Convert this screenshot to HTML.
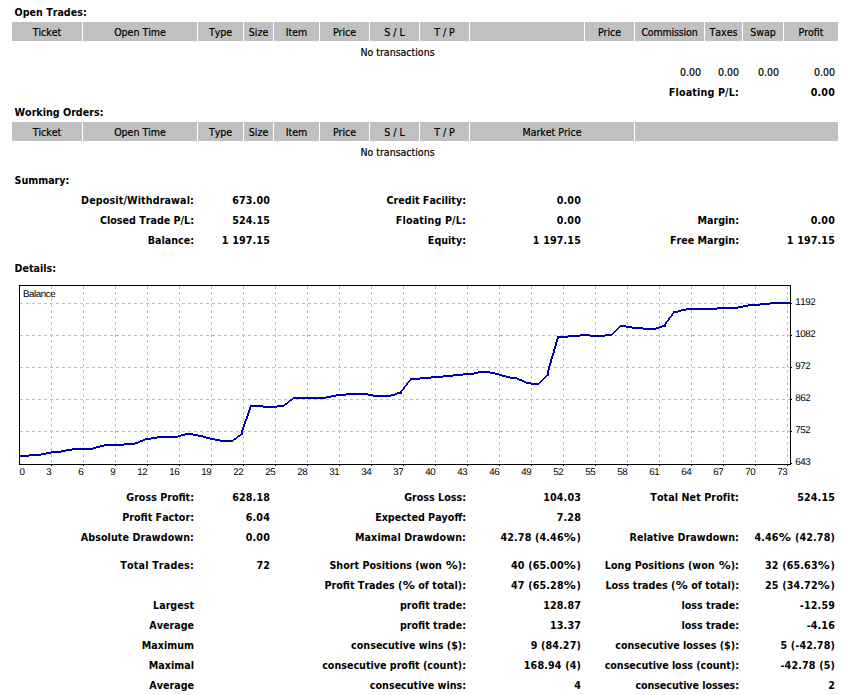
<!DOCTYPE html>
<html lang="en"><head><meta charset="utf-8"><title>Statement</title>
<style>
html,body{margin:0;padding:0;background:#fff}
body{width:853px;height:695px;position:relative;overflow:hidden;font-family:"DejaVu Sans Condensed", "Liberation Sans", sans-serif;font-size:10.5px;color:#000;font-kerning:none;-webkit-text-stroke:0.2px #000}
.t{position:absolute;white-space:nowrap;line-height:20px;height:20px}
.b{font-weight:bold;font-size:10.65px;-webkit-text-stroke:0}
.r{text-align:right}
.p{display:inline-block;transform:scaleX(1.25);margin:0 1.5px}
.c{text-align:center}
.h{position:absolute;height:19px;line-height:20px;background:#c0c0c0;text-align:center;white-space:nowrap}
.chart{position:absolute;display:block}
</style></head><body>
<div class="t b" style="left:14.5px;top:3px">Open Trades:</div>
<div class="h" style="left:12px;top:22px;width:70px">Ticket</div>
<div class="h" style="left:83px;top:22px;width:114px">Open Time</div>
<div class="h" style="left:198px;top:22px;width:45px">Type</div>
<div class="h" style="left:244px;top:22px;width:29px">Size</div>
<div class="h" style="left:274px;top:22px;width:45px">Item</div>
<div class="h" style="left:320px;top:22px;width:49px">Price</div>
<div class="h" style="left:370px;top:22px;width:49px">S / L</div>
<div class="h" style="left:420px;top:22px;width:49px">T / P</div>
<div class="h" style="left:470px;top:22px;width:114px"></div>
<div class="h" style="left:585px;top:22px;width:49px">Price</div>
<div class="h" style="left:635px;top:22px;width:69px;letter-spacing:-0.15px">Commission</div>
<div class="h" style="left:705px;top:22px;width:37px">Taxes</div>
<div class="h" style="left:743px;top:22px;width:40px">Swap</div>
<div class="h" style="left:784px;top:22px;width:54px">Profit</div>
<div class="t c" style="left:247.5px;top:42px;width:300px">No transactions</div>
<div class="t r" style="left:401px;top:62px;width:300px">0.00</div>
<div class="t r" style="left:439px;top:62px;width:300px">0.00</div>
<div class="t r" style="left:479px;top:62px;width:300px">0.00</div>
<div class="t r" style="left:535px;top:62px;width:300px">0.00</div>
<div class="t b r" style="left:439px;top:83px;width:300px;letter-spacing:0.16px">Floating P/L:</div>
<div class="t b r" style="left:535px;top:83px;width:300px;letter-spacing:0.15px">0.00</div>
<div class="t b" style="left:14.5px;top:103px">Working Orders:</div>
<div class="h" style="left:12px;top:122px;width:70px">Ticket</div>
<div class="h" style="left:83px;top:122px;width:114px">Open Time</div>
<div class="h" style="left:198px;top:122px;width:45px">Type</div>
<div class="h" style="left:244px;top:122px;width:29px">Size</div>
<div class="h" style="left:274px;top:122px;width:45px">Item</div>
<div class="h" style="left:320px;top:122px;width:49px">Price</div>
<div class="h" style="left:370px;top:122px;width:49px">S / L</div>
<div class="h" style="left:420px;top:122px;width:49px">T / P</div>
<div class="h" style="left:470px;top:122px;width:164px">Market Price</div>
<div class="h" style="left:635px;top:122px;width:203px"></div>
<div class="t c" style="left:247.5px;top:142px;width:300px">No transactions</div>
<div class="t b" style="left:14.5px;top:171px">Summary:</div>
<div class="t b r" style="left:-106px;top:191px;width:300px;letter-spacing:0.12px">Deposit/Withdrawal:</div>
<div class="t b r" style="left:-30px;top:191px;width:300px;letter-spacing:0.15px">673.00</div>
<div class="t b r" style="left:166px;top:191px;width:300px">Credit Facility:</div>
<div class="t b r" style="left:281px;top:191px;width:300px;letter-spacing:0.15px">0.00</div>
<div class="t b r" style="left:-106px;top:211px;width:300px">Closed Trade P/L:</div>
<div class="t b r" style="left:-30px;top:211px;width:300px;letter-spacing:0.15px">524.15</div>
<div class="t b r" style="left:166px;top:211px;width:300px;letter-spacing:0.16px">Floating P/L:</div>
<div class="t b r" style="left:281px;top:211px;width:300px;letter-spacing:0.15px">0.00</div>
<div class="t b r" style="left:439px;top:211px;width:300px">Margin:</div>
<div class="t b r" style="left:535px;top:211px;width:300px;letter-spacing:0.15px">0.00</div>
<div class="t b r" style="left:-106px;top:231px;width:300px">Balance:</div>
<div class="t b r" style="left:-30px;top:231px;width:300px;letter-spacing:0.15px">1 197.15</div>
<div class="t b r" style="left:166px;top:231px;width:300px">Equity:</div>
<div class="t b r" style="left:281px;top:231px;width:300px;letter-spacing:0.15px">1 197.15</div>
<div class="t b r" style="left:439px;top:231px;width:300px">Free Margin:</div>
<div class="t b r" style="left:535px;top:231px;width:300px;letter-spacing:0.15px">1 197.15</div>
<div class="t b" style="left:14.5px;top:259px">Details:</div>
<svg class="chart" style="left:16px;top:282px" width="820" height="200" viewBox="16 282 820 200">
<path d="M51.5 286V464M83.5 286V464M115.5 286V464M147.5 286V464M179.5 286V464M211.5 286V464M243.5 286V464M275.5 286V464M307.5 286V464M339.5 286V464M371.5 286V464M403.5 286V464M435.5 286V464M467.5 286V464M499.5 286V464M531.5 286V464M563.5 286V464M595.5 286V464M627.5 286V464M659.5 286V464M691.5 286V464M723.5 286V464M755.5 286V464M787.5 286V464M20 303.5H790M20 335.5H790M20 367.5H790M20 399.5H790M20 431.5H790" stroke="#c0c0c0" stroke-width="1" stroke-dasharray="3 3" fill="none" shape-rendering="crispEdges"/>
<path d="M51.5 465v1M83.5 465v1M115.5 465v1M147.5 465v1M179.5 465v1M211.5 465v1M243.5 465v1M275.5 465v1M307.5 465v1M339.5 465v1M371.5 465v1M403.5 465v1M435.5 465v1M467.5 465v1M499.5 465v1M531.5 465v1M563.5 465v1M595.5 465v1M627.5 465v1M659.5 465v1M691.5 465v1M723.5 465v1M755.5 465v1M787.5 465v1M791 303.5h1M791 335.5h1M791 367.5h1M791 399.5h1M791 431.5h1M791 463.5h1" stroke="#000" stroke-width="1" fill="none" shape-rendering="crispEdges"/>
<path d="M770 302h20v1h-20zM760 303h30v1h-30zM748 304h22v1h-22zM743 305h17v1h-17zM738 306h10v1h-10zM717 307h26v1h-26zM686 308h52v1h-52zM681 309h36v1h-36zM678 310h8v1h-8zM673 311h8v1h-8zM673 312h5v1h-5zM672 313h2v1h-2zM671 314h2v1h-2zM671 315h2v1h-2zM670 316h2v1h-2zM669 317h2v1h-2zM668 318h2v1h-2zM668 319h2v1h-2zM667 320h2v1h-2zM666 321h2v1h-2zM665 322h2v1h-2zM665 323h2v1h-2zM664 324h2v1h-2zM620 325h6v1h-6zM662 325h4v1h-4zM619 326h13v1h-13zM659 326h7v1h-7zM618 327h2v1h-2zM626 327h17v1h-17zM656 327h6v1h-6zM617 328h2v1h-2zM632 328h27v1h-27zM616 329h2v1h-2zM643 329h13v1h-13zM615 330h2v1h-2zM614 331h2v1h-2zM613 332h2v1h-2zM612 333h2v1h-2zM580 334h10v1h-10zM605 334h8v1h-8zM568 335h44v1h-44zM557 336h23v1h-23zM590 336h15v1h-15zM557 337h11v1h-11zM557 338h2v1h-2zM556 339h2v1h-2zM556 340h2v1h-2zM556 341h2v1h-2zM555 342h2v1h-2zM555 343h2v1h-2zM555 344h2v1h-2zM555 345h2v1h-2zM554 346h2v1h-2zM554 347h2v1h-2zM554 348h2v1h-2zM553 349h2v1h-2zM553 350h2v1h-2zM553 351h2v1h-2zM553 352h2v1h-2zM552 353h2v1h-2zM552 354h2v1h-2zM552 355h2v1h-2zM551 356h2v1h-2zM551 357h2v1h-2zM551 358h2v1h-2zM550 359h2v1h-2zM550 360h2v1h-2zM550 361h2v1h-2zM550 362h2v1h-2zM549 363h2v1h-2zM549 364h2v1h-2zM549 365h2v1h-2zM548 366h2v1h-2zM548 367h2v1h-2zM548 368h2v1h-2zM548 369h2v1h-2zM547 370h2v1h-2zM478 371h12v1h-12zM547 371h2v1h-2zM474 372h21v1h-21zM547 372h2v1h-2zM463 373h15v1h-15zM490 373h9v1h-9zM547 373h2v1h-2zM453 374h21v1h-21zM495 374h7v1h-7zM547 374h2v1h-2zM443 375h20v1h-20zM499 375h7v1h-7zM546 375h3v1h-3zM431 376h22v1h-22zM502 376h8v1h-8zM545 376h2v1h-2zM420 377h23v1h-23zM506 377h11v1h-11zM544 377h2v1h-2zM410 378h21v1h-21zM510 378h9v1h-9zM543 378h2v1h-2zM410 379h10v1h-10zM517 379h5v1h-5zM542 379h2v1h-2zM409 380h2v1h-2zM519 380h5v1h-5zM541 380h2v1h-2zM408 381h2v1h-2zM522 381h4v1h-4zM540 381h2v1h-2zM407 382h2v1h-2zM524 382h7v1h-7zM539 382h2v1h-2zM406 383h2v1h-2zM526 383h14v1h-14zM406 384h2v1h-2zM531 384h8v1h-8zM405 385h2v1h-2zM404 386h2v1h-2zM403 387h2v1h-2zM403 388h2v1h-2zM402 389h2v1h-2zM401 390h2v1h-2zM400 391h2v1h-2zM397 392h5v1h-5zM346 393h22v1h-22zM395 393h7v1h-7zM336 394h37v1h-37zM391 394h6v1h-6zM331 395h15v1h-15zM368 395h27v1h-27zM326 396h10v1h-10zM373 396h18v1h-18zM293 397h38v1h-38zM292 398h34v1h-34zM290 399h3v1h-3zM289 400h3v1h-3zM288 401h2v1h-2zM287 402h2v1h-2zM285 403h3v1h-3zM284 404h3v1h-3zM250 405h13v1h-13zM277 405h8v1h-8zM250 406h34v1h-34zM249 407h2v1h-2zM263 407h14v1h-14zM249 408h2v1h-2zM249 409h2v1h-2zM248 410h2v1h-2zM248 411h2v1h-2zM248 412h2v1h-2zM247 413h2v1h-2zM247 414h2v1h-2zM247 415h2v1h-2zM246 416h2v1h-2zM246 417h2v1h-2zM246 418h2v1h-2zM245 419h2v1h-2zM245 420h2v1h-2zM244 421h2v1h-2zM244 422h2v1h-2zM244 423h2v1h-2zM243 424h2v1h-2zM243 425h2v1h-2zM243 426h2v1h-2zM242 427h2v1h-2zM242 428h2v1h-2zM242 429h2v1h-2zM241 430h2v1h-2zM241 431h2v1h-2zM241 432h2v1h-2zM185 433h8v1h-8zM241 433h2v1h-2zM181 434h17v1h-17zM240 434h3v1h-3zM178 435h7v1h-7zM193 435h10v1h-10zM238 435h3v1h-3zM157 436h24v1h-24zM198 436h8v1h-8zM237 436h3v1h-3zM151 437h27v1h-27zM203 437h7v1h-7zM236 437h2v1h-2zM145 438h12v1h-12zM206 438h9v1h-9zM234 438h3v1h-3zM143 439h8v1h-8zM210 439h10v1h-10zM233 439h3v1h-3zM140 440h5v1h-5zM215 440h19v1h-19zM138 441h5v1h-5zM220 441h13v1h-13zM135 442h5v1h-5zM124 443h14v1h-14zM104 444h31v1h-31zM100 445h24v1h-24zM96 446h8v1h-8zM93 447h7v1h-7zM72 448h24v1h-24zM66 449h27v1h-27zM61 450h11v1h-11zM51 451h15v1h-15zM46 452h15v1h-15zM41 453h10v1h-10zM29 454h17v1h-17zM20 455h21v1h-21zM20 456h9v1h-9z" fill="#0000a6" shape-rendering="crispEdges"/>
<rect x="19.5" y="285.5" width="771" height="179" fill="none" stroke="#000" stroke-width="1" shape-rendering="crispEdges"/>
<g font-family="Liberation Sans, Arial, sans-serif" font-size="9.8" letter-spacing="-0.45" text-rendering="geometricPrecision" fill="#000">
<text transform="translate(23 297)">Balance</text>
<text transform="translate(19.6 475)">0</text>
<text transform="translate(51.2 475)" text-anchor="end">3</text>
<text transform="translate(83.2 475)" text-anchor="end">6</text>
<text transform="translate(115.2 475)" text-anchor="end">9</text>
<text transform="translate(147.2 475)" text-anchor="end">12</text>
<text transform="translate(179.2 475)" text-anchor="end">16</text>
<text transform="translate(211.2 475)" text-anchor="end">19</text>
<text transform="translate(243.2 475)" text-anchor="end">22</text>
<text transform="translate(275.2 475)" text-anchor="end">25</text>
<text transform="translate(307.2 475)" text-anchor="end">28</text>
<text transform="translate(339.2 475)" text-anchor="end">31</text>
<text transform="translate(371.2 475)" text-anchor="end">34</text>
<text transform="translate(403.2 475)" text-anchor="end">37</text>
<text transform="translate(435.2 475)" text-anchor="end">40</text>
<text transform="translate(467.2 475)" text-anchor="end">43</text>
<text transform="translate(499.2 475)" text-anchor="end">46</text>
<text transform="translate(531.2 475)" text-anchor="end">49</text>
<text transform="translate(563.2 475)" text-anchor="end">52</text>
<text transform="translate(595.2 475)" text-anchor="end">55</text>
<text transform="translate(627.2 475)" text-anchor="end">58</text>
<text transform="translate(659.2 475)" text-anchor="end">61</text>
<text transform="translate(691.2 475)" text-anchor="end">64</text>
<text transform="translate(723.2 475)" text-anchor="end">67</text>
<text transform="translate(755.2 475)" text-anchor="end">70</text>
<text transform="translate(787.2 475)" text-anchor="end">73</text>
<text transform="translate(795.3 305)">1192</text>
<text transform="translate(795.3 337)">1082</text>
<text transform="translate(795.3 369)">972</text>
<text transform="translate(795.3 401)">862</text>
<text transform="translate(795.3 433)">752</text>
<text transform="translate(795.3 465)">643</text>
</g></svg>
<div class="t b r" style="left:-106px;top:488px;width:300px">Gross Profit:</div>
<div class="t b r" style="left:-30px;top:488px;width:300px;letter-spacing:0.15px">628.18</div>
<div class="t b r" style="left:166px;top:488px;width:300px">Gross Loss:</div>
<div class="t b r" style="left:281px;top:488px;width:300px;letter-spacing:0.15px">104.03</div>
<div class="t b r" style="left:439px;top:488px;width:300px;letter-spacing:0.08px">Total Net Profit:</div>
<div class="t b r" style="left:535px;top:488px;width:300px;letter-spacing:0.15px">524.15</div>
<div class="t b r" style="left:-106px;top:508px;width:300px">Profit Factor:</div>
<div class="t b r" style="left:-30px;top:508px;width:300px;letter-spacing:0.15px">6.04</div>
<div class="t b r" style="left:166px;top:508px;width:300px">Expected Payoff:</div>
<div class="t b r" style="left:281px;top:508px;width:300px;letter-spacing:0.15px">7.28</div>
<div class="t b r" style="left:-106px;top:528px;width:300px;letter-spacing:0.07px">Absolute Drawdown:</div>
<div class="t b r" style="left:-30px;top:528px;width:300px;letter-spacing:0.15px">0.00</div>
<div class="t b r" style="left:166px;top:528px;width:300px;letter-spacing:0.1px">Maximal Drawdown:</div>
<div class="t b r" style="left:281px;top:528px;width:300px;letter-spacing:0.15px">42.78 (4.46<span class="p">%</span>)</div>
<div class="t b r" style="left:439px;top:528px;width:300px;letter-spacing:0.06px">Relative Drawdown:</div>
<div class="t b r" style="left:535px;top:528px;width:300px;letter-spacing:0.15px">4.46<span class="p">%</span> (42.78)</div>
<div class="t b r" style="left:-106px;top:556px;width:300px;letter-spacing:0.18px">Total Trades:</div>
<div class="t b r" style="left:-30px;top:556px;width:300px;letter-spacing:0.15px">72</div>
<div class="t b r" style="left:166px;top:556px;width:300px">Short Positions (won <span class="p">%</span>):</div>
<div class="t b r" style="left:281px;top:556px;width:300px;letter-spacing:0.15px">40 (65.00<span class="p">%</span>)</div>
<div class="t b r" style="left:439px;top:556px;width:300px;letter-spacing:0.04px">Long Positions (won <span class="p">%</span>):</div>
<div class="t b r" style="left:535px;top:556px;width:300px;letter-spacing:0.15px">32 (65.63<span class="p">%</span>)</div>
<div class="t b r" style="left:166px;top:576px;width:300px">Profit Trades (<span class="p">%</span> of total):</div>
<div class="t b r" style="left:281px;top:576px;width:300px;letter-spacing:0.15px">47 (65.28<span class="p">%</span>)</div>
<div class="t b r" style="left:439px;top:576px;width:300px">Loss trades (<span class="p">%</span> of total):</div>
<div class="t b r" style="left:535px;top:576px;width:300px;letter-spacing:0.15px">25 (34.72<span class="p">%</span>)</div>
<div class="t b r" style="left:-106px;top:596px;width:300px">Largest</div>
<div class="t b r" style="left:166px;top:596px;width:300px">profit trade:</div>
<div class="t b r" style="left:281px;top:596px;width:300px;letter-spacing:0.15px">128.87</div>
<div class="t b r" style="left:439px;top:596px;width:300px">loss trade:</div>
<div class="t b r" style="left:535px;top:596px;width:300px;letter-spacing:0.15px">-12.59</div>
<div class="t b r" style="left:-106px;top:616px;width:300px">Average</div>
<div class="t b r" style="left:166px;top:616px;width:300px">profit trade:</div>
<div class="t b r" style="left:281px;top:616px;width:300px;letter-spacing:0.15px">13.37</div>
<div class="t b r" style="left:439px;top:616px;width:300px">loss trade:</div>
<div class="t b r" style="left:535px;top:616px;width:300px;letter-spacing:0.15px">-4.16</div>
<div class="t b r" style="left:-106px;top:636px;width:300px">Maximum</div>
<div class="t b r" style="left:166px;top:636px;width:300px">consecutive wins ($):</div>
<div class="t b r" style="left:281px;top:636px;width:300px;letter-spacing:0.15px">9 (84.27)</div>
<div class="t b r" style="left:439px;top:636px;width:300px">consecutive losses ($):</div>
<div class="t b r" style="left:535px;top:636px;width:300px;letter-spacing:0.15px">5 (-42.78)</div>
<div class="t b r" style="left:-106px;top:656px;width:300px">Maximal</div>
<div class="t b r" style="left:166px;top:656px;width:300px">consecutive profit (count):</div>
<div class="t b r" style="left:281px;top:656px;width:300px;letter-spacing:0.15px">168.94 (4)</div>
<div class="t b r" style="left:439px;top:656px;width:300px;letter-spacing:-0.04px">consecutive loss (count):</div>
<div class="t b r" style="left:535px;top:656px;width:300px;letter-spacing:0.15px">-42.78 (5)</div>
<div class="t b r" style="left:-106px;top:676px;width:300px">Average</div>
<div class="t b r" style="left:166px;top:676px;width:300px">consecutive wins:</div>
<div class="t b r" style="left:281px;top:676px;width:300px;letter-spacing:0.15px">4</div>
<div class="t b r" style="left:439px;top:676px;width:300px;letter-spacing:-0.07px">consecutive losses:</div>
<div class="t b r" style="left:535px;top:676px;width:300px;letter-spacing:0.15px">2</div>
</body></html>
